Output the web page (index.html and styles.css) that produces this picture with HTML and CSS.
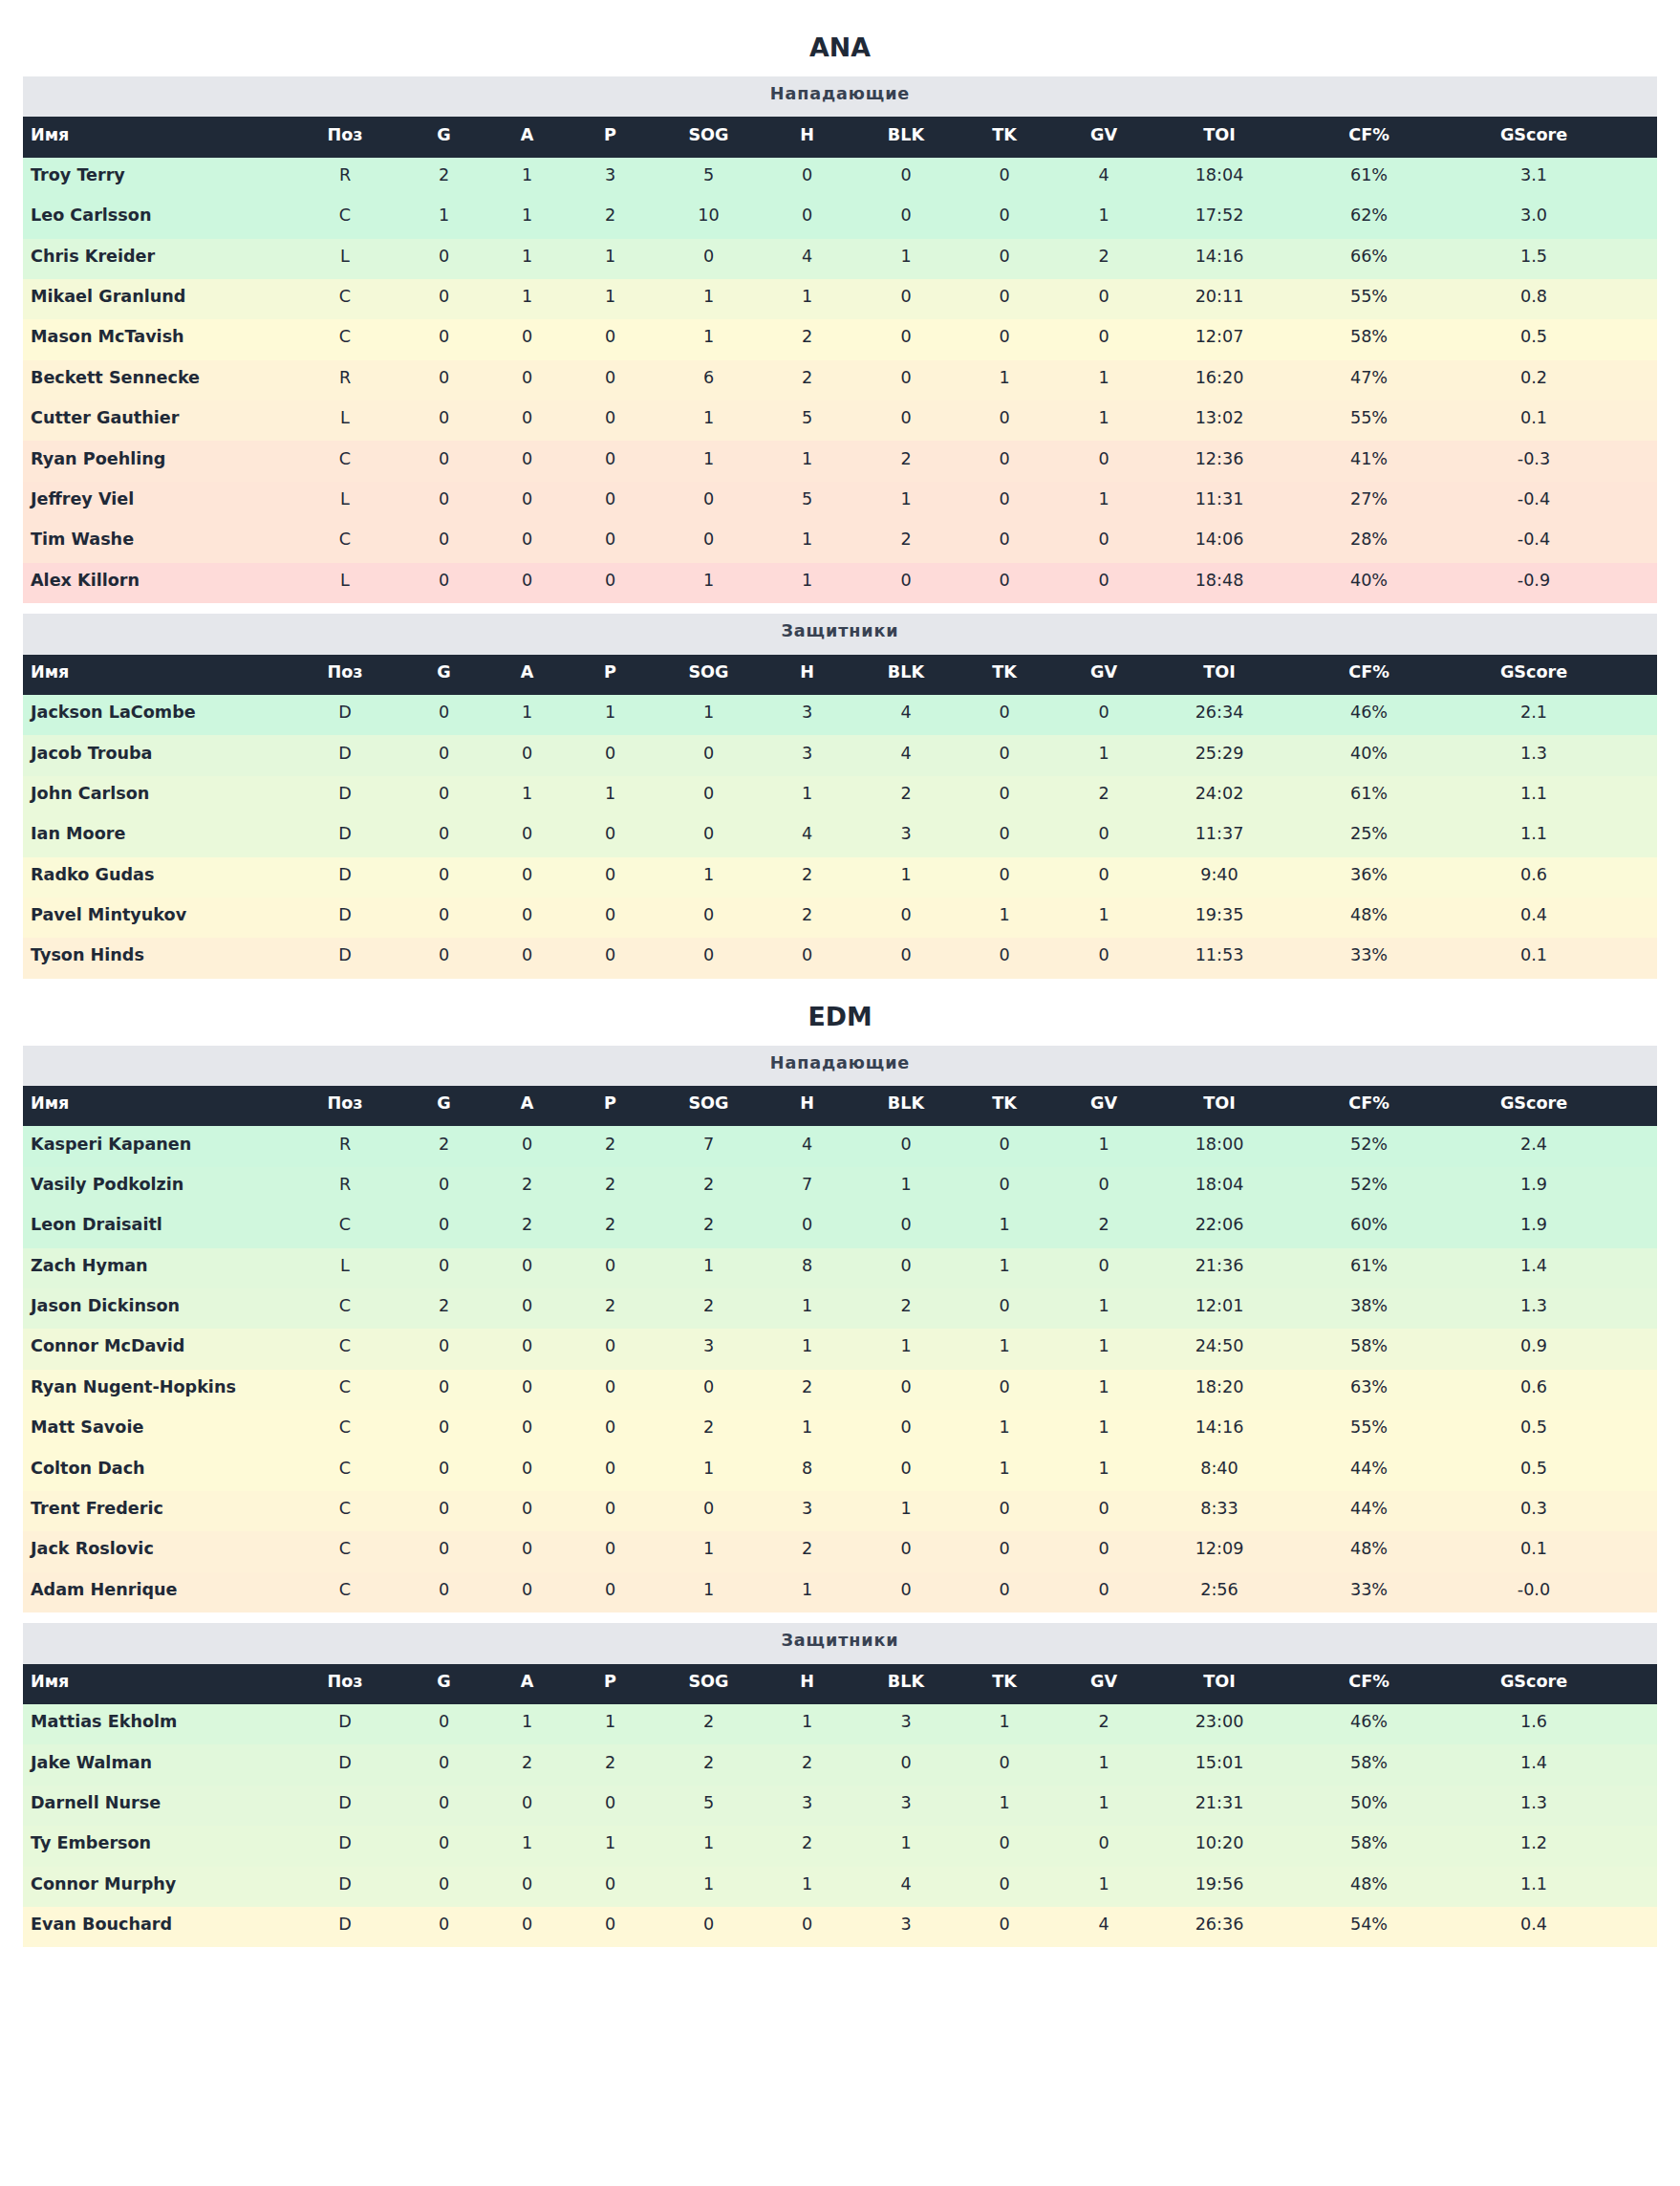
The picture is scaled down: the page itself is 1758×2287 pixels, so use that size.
FILE: index.html
```html
<!DOCTYPE html>
<html lang="ru">
<head>
<meta charset="utf-8">
<title>ANA — EDM</title>
<link rel="stylesheet" href="styles.css">
</head>
<body>
<main class="page">

<section class="team">
  <h2 class="team-title">ANA</h2>

  <div class="block">
    <div class="group-label">Нападающие</div>
    <table class="stats">
      <colgroup>
        <col class="c-name"><col class="c-pos"><col class="c-sm"><col class="c-sm"><col class="c-sm"><col class="c-sog"><col class="c-sm"><col class="c-blk"><col class="c-tk"><col class="c-gv"><col class="c-toi"><col class="c-cf"><col class="c-gs">
      </colgroup>
      <thead>
        <tr><th class="name">Имя</th><th>Поз</th><th>G</th><th>A</th><th>P</th><th>SOG</th><th>H</th><th>BLK</th><th>TK</th><th>GV</th><th>TOI</th><th>CF%</th><th>GScore</th></tr>
      </thead>
      <tbody>
        <tr style="background:#cdf7de"><td class="name">Troy Terry</td><td>R</td><td>2</td><td>1</td><td>3</td><td>5</td><td>0</td><td>0</td><td>0</td><td>4</td><td>18:04</td><td>61%</td><td>3.1</td></tr>
        <tr style="background:#cdf7de"><td class="name">Leo Carlsson</td><td>C</td><td>1</td><td>1</td><td>2</td><td>10</td><td>0</td><td>0</td><td>0</td><td>1</td><td>17:52</td><td>62%</td><td>3.0</td></tr>
        <tr style="background:#ddf8dc"><td class="name">Chris Kreider</td><td>L</td><td>0</td><td>1</td><td>1</td><td>0</td><td>4</td><td>1</td><td>0</td><td>2</td><td>14:16</td><td>66%</td><td>1.5</td></tr>
        <tr style="background:#f4f9d8"><td class="name">Mikael Granlund</td><td>C</td><td>0</td><td>1</td><td>1</td><td>1</td><td>1</td><td>0</td><td>0</td><td>0</td><td>20:11</td><td>55%</td><td>0.8</td></tr>
        <tr style="background:#fefad7"><td class="name">Mason McTavish</td><td>C</td><td>0</td><td>0</td><td>0</td><td>1</td><td>2</td><td>0</td><td>0</td><td>0</td><td>12:07</td><td>58%</td><td>0.5</td></tr>
        <tr style="background:#fef3d7"><td class="name">Beckett Sennecke</td><td>R</td><td>0</td><td>0</td><td>0</td><td>6</td><td>2</td><td>0</td><td>1</td><td>1</td><td>16:20</td><td>47%</td><td>0.2</td></tr>
        <tr style="background:#fef1d8"><td class="name">Cutter Gauthier</td><td>L</td><td>0</td><td>0</td><td>0</td><td>1</td><td>5</td><td>0</td><td>0</td><td>1</td><td>13:02</td><td>55%</td><td>0.1</td></tr>
        <tr style="background:#fee8d8"><td class="name">Ryan Poehling</td><td>C</td><td>0</td><td>0</td><td>0</td><td>1</td><td>1</td><td>2</td><td>0</td><td>0</td><td>12:36</td><td>41%</td><td>-0.3</td></tr>
        <tr style="background:#fee6d8"><td class="name">Jeffrey Viel</td><td>L</td><td>0</td><td>0</td><td>0</td><td>0</td><td>5</td><td>1</td><td>0</td><td>1</td><td>11:31</td><td>27%</td><td>-0.4</td></tr>
        <tr style="background:#fee6d8"><td class="name">Tim Washe</td><td>C</td><td>0</td><td>0</td><td>0</td><td>0</td><td>1</td><td>2</td><td>0</td><td>0</td><td>14:06</td><td>28%</td><td>-0.4</td></tr>
        <tr style="background:#fedbd9"><td class="name">Alex Killorn</td><td>L</td><td>0</td><td>0</td><td>0</td><td>1</td><td>1</td><td>0</td><td>0</td><td>0</td><td>18:48</td><td>40%</td><td>-0.9</td></tr>
      </tbody>
    </table>
  </div>

  <div class="block">
    <div class="group-label">Защитники</div>
    <table class="stats">
      <colgroup>
        <col class="c-name"><col class="c-pos"><col class="c-sm"><col class="c-sm"><col class="c-sm"><col class="c-sog"><col class="c-sm"><col class="c-blk"><col class="c-tk"><col class="c-gv"><col class="c-toi"><col class="c-cf"><col class="c-gs">
      </colgroup>
      <thead>
        <tr><th class="name">Имя</th><th>Поз</th><th>G</th><th>A</th><th>P</th><th>SOG</th><th>H</th><th>BLK</th><th>TK</th><th>GV</th><th>TOI</th><th>CF%</th><th>GScore</th></tr>
      </thead>
      <tbody>
        <tr style="background:#cdf7de"><td class="name">Jackson LaCombe</td><td>D</td><td>0</td><td>1</td><td>1</td><td>1</td><td>3</td><td>4</td><td>0</td><td>0</td><td>26:34</td><td>46%</td><td>2.1</td></tr>
        <tr style="background:#e4f8db"><td class="name">Jacob Trouba</td><td>D</td><td>0</td><td>0</td><td>0</td><td>0</td><td>3</td><td>4</td><td>0</td><td>1</td><td>25:29</td><td>40%</td><td>1.3</td></tr>
        <tr style="background:#eaf9da"><td class="name">John Carlson</td><td>D</td><td>0</td><td>1</td><td>1</td><td>0</td><td>1</td><td>2</td><td>0</td><td>2</td><td>24:02</td><td>61%</td><td>1.1</td></tr>
        <tr style="background:#eaf9da"><td class="name">Ian Moore</td><td>D</td><td>0</td><td>0</td><td>0</td><td>0</td><td>4</td><td>3</td><td>0</td><td>0</td><td>11:37</td><td>25%</td><td>1.1</td></tr>
        <tr style="background:#fbfad8"><td class="name">Radko Gudas</td><td>D</td><td>0</td><td>0</td><td>0</td><td>1</td><td>2</td><td>1</td><td>0</td><td>0</td><td>9:40</td><td>36%</td><td>0.6</td></tr>
        <tr style="background:#fef8d7"><td class="name">Pavel Mintyukov</td><td>D</td><td>0</td><td>0</td><td>0</td><td>0</td><td>2</td><td>0</td><td>1</td><td>1</td><td>19:35</td><td>48%</td><td>0.4</td></tr>
        <tr style="background:#fef1d8"><td class="name">Tyson Hinds</td><td>D</td><td>0</td><td>0</td><td>0</td><td>0</td><td>0</td><td>0</td><td>0</td><td>0</td><td>11:53</td><td>33%</td><td>0.1</td></tr>
      </tbody>
    </table>
  </div>
</section>

<section class="team">
  <h2 class="team-title">EDM</h2>

  <div class="block">
    <div class="group-label">Нападающие</div>
    <table class="stats">
      <colgroup>
        <col class="c-name"><col class="c-pos"><col class="c-sm"><col class="c-sm"><col class="c-sm"><col class="c-sog"><col class="c-sm"><col class="c-blk"><col class="c-tk"><col class="c-gv"><col class="c-toi"><col class="c-cf"><col class="c-gs">
      </colgroup>
      <thead>
        <tr><th class="name">Имя</th><th>Поз</th><th>G</th><th>A</th><th>P</th><th>SOG</th><th>H</th><th>BLK</th><th>TK</th><th>GV</th><th>TOI</th><th>CF%</th><th>GScore</th></tr>
      </thead>
      <tbody>
        <tr style="background:#cdf7de"><td class="name">Kasperi Kapanen</td><td>R</td><td>2</td><td>0</td><td>2</td><td>7</td><td>4</td><td>0</td><td>0</td><td>1</td><td>18:00</td><td>52%</td><td>2.4</td></tr>
        <tr style="background:#d0f7dd"><td class="name">Vasily Podkolzin</td><td>R</td><td>0</td><td>2</td><td>2</td><td>2</td><td>7</td><td>1</td><td>0</td><td>0</td><td>18:04</td><td>52%</td><td>1.9</td></tr>
        <tr style="background:#d0f7dd"><td class="name">Leon Draisaitl</td><td>C</td><td>0</td><td>2</td><td>2</td><td>2</td><td>0</td><td>0</td><td>1</td><td>2</td><td>22:06</td><td>60%</td><td>1.9</td></tr>
        <tr style="background:#e1f8db"><td class="name">Zach Hyman</td><td>L</td><td>0</td><td>0</td><td>0</td><td>1</td><td>8</td><td>0</td><td>1</td><td>0</td><td>21:36</td><td>61%</td><td>1.4</td></tr>
        <tr style="background:#e4f8db"><td class="name">Jason Dickinson</td><td>C</td><td>2</td><td>0</td><td>2</td><td>2</td><td>1</td><td>2</td><td>0</td><td>1</td><td>12:01</td><td>38%</td><td>1.3</td></tr>
        <tr style="background:#f1f9d9"><td class="name">Connor McDavid</td><td>C</td><td>0</td><td>0</td><td>0</td><td>3</td><td>1</td><td>1</td><td>1</td><td>1</td><td>24:50</td><td>58%</td><td>0.9</td></tr>
        <tr style="background:#fbfad8"><td class="name">Ryan Nugent-Hopkins</td><td>C</td><td>0</td><td>0</td><td>0</td><td>0</td><td>2</td><td>0</td><td>0</td><td>1</td><td>18:20</td><td>63%</td><td>0.6</td></tr>
        <tr style="background:#fefad7"><td class="name">Matt Savoie</td><td>C</td><td>0</td><td>0</td><td>0</td><td>2</td><td>1</td><td>0</td><td>1</td><td>1</td><td>14:16</td><td>55%</td><td>0.5</td></tr>
        <tr style="background:#fefad7"><td class="name">Colton Dach</td><td>C</td><td>0</td><td>0</td><td>0</td><td>1</td><td>8</td><td>0</td><td>1</td><td>1</td><td>8:40</td><td>44%</td><td>0.5</td></tr>
        <tr style="background:#fef6d7"><td class="name">Trent Frederic</td><td>C</td><td>0</td><td>0</td><td>0</td><td>0</td><td>3</td><td>1</td><td>0</td><td>0</td><td>8:33</td><td>44%</td><td>0.3</td></tr>
        <tr style="background:#fef1d8"><td class="name">Jack Roslovic</td><td>C</td><td>0</td><td>0</td><td>0</td><td>1</td><td>2</td><td>0</td><td>0</td><td>0</td><td>12:09</td><td>48%</td><td>0.1</td></tr>
        <tr style="background:#feefd8"><td class="name">Adam Henrique</td><td>C</td><td>0</td><td>0</td><td>0</td><td>1</td><td>1</td><td>0</td><td>0</td><td>0</td><td>2:56</td><td>33%</td><td>-0.0</td></tr>
      </tbody>
    </table>
  </div>

  <div class="block">
    <div class="group-label">Защитники</div>
    <table class="stats">
      <colgroup>
        <col class="c-name"><col class="c-pos"><col class="c-sm"><col class="c-sm"><col class="c-sm"><col class="c-sog"><col class="c-sm"><col class="c-blk"><col class="c-tk"><col class="c-gv"><col class="c-toi"><col class="c-cf"><col class="c-gs">
      </colgroup>
      <thead>
        <tr><th class="name">Имя</th><th>Поз</th><th>G</th><th>A</th><th>P</th><th>SOG</th><th>H</th><th>BLK</th><th>TK</th><th>GV</th><th>TOI</th><th>CF%</th><th>GScore</th></tr>
      </thead>
      <tbody>
        <tr style="background:#daf8dc"><td class="name">Mattias Ekholm</td><td>D</td><td>0</td><td>1</td><td>1</td><td>2</td><td>1</td><td>3</td><td>1</td><td>2</td><td>23:00</td><td>46%</td><td>1.6</td></tr>
        <tr style="background:#e1f8db"><td class="name">Jake Walman</td><td>D</td><td>0</td><td>2</td><td>2</td><td>2</td><td>2</td><td>0</td><td>0</td><td>1</td><td>15:01</td><td>58%</td><td>1.4</td></tr>
        <tr style="background:#e4f8db"><td class="name">Darnell Nurse</td><td>D</td><td>0</td><td>0</td><td>0</td><td>5</td><td>3</td><td>3</td><td>1</td><td>1</td><td>21:31</td><td>50%</td><td>1.3</td></tr>
        <tr style="background:#e7f9da"><td class="name">Ty Emberson</td><td>D</td><td>0</td><td>1</td><td>1</td><td>1</td><td>2</td><td>1</td><td>0</td><td>0</td><td>10:20</td><td>58%</td><td>1.2</td></tr>
        <tr style="background:#eaf9da"><td class="name">Connor Murphy</td><td>D</td><td>0</td><td>0</td><td>0</td><td>1</td><td>1</td><td>4</td><td>0</td><td>1</td><td>19:56</td><td>48%</td><td>1.1</td></tr>
        <tr style="background:#fef8d7"><td class="name">Evan Bouchard</td><td>D</td><td>0</td><td>0</td><td>0</td><td>0</td><td>0</td><td>3</td><td>0</td><td>4</td><td>26:36</td><td>54%</td><td>0.4</td></tr>
      </tbody>
    </table>
  </div>
</section>

</main>
</body>
</html>
```

FILE: styles.css
```css
html, body {
  margin: 0;
  padding: 0;
  background: #ffffff;
}

body {
  font-family: "DejaVu Sans", "Noto Sans", sans-serif;
  color: #1f2937;
  font-size: 17.6px;
}

.page {
  padding: 34px 24px 40px;
}

.team + .team {
  margin-top: 24px;
}

.team-title {
  margin: 0 0 14px;
  font-size: 26.8px;
  line-height: 32px;
  font-weight: bold;
  text-align: center;
  color: #1f2937;
}

.block + .block {
  margin-top: 11.4px;
}

.group-label {
  background: #e5e7eb;
  color: #374151;
  font-weight: bold;
  font-size: 17.6px;
  letter-spacing: 0.88px;
  text-align: center;
  line-height: 20px;
  padding: 8.2px 8px 14.2px;
}

.stats {
  width: 100%;
  table-layout: fixed;
  border-collapse: collapse;
  border-spacing: 0;
}

.c-name { width: 277px; }
.c-pos  { width: 120px; }
.c-sm   { width: 87px; }
.c-sog  { width: 119px; }
.c-blk  { width: 120px; }
.c-tk   { width: 86px; }
.c-gv   { width: 122px; }
.c-toi  { width: 120px; }
.c-cf   { width: 193px; }
.c-gs   { width: 205px; }

.stats th,
.stats td {
  padding: 8.2px 8px 14.2px;
  line-height: 20px;
  font-size: 17.6px;
  text-align: center;
  white-space: nowrap;
}

.stats th:last-child,
.stats td:last-child {
  padding-right: 61px;
}

.stats thead tr {
  background: #1f2937;
}

.stats th {
  color: #ffffff;
  font-weight: bold;
}

.stats td {
  color: #1f2937;
  font-weight: normal;
}

.stats .name {
  text-align: left;
}

.stats td.name {
  font-weight: bold;
}
```
